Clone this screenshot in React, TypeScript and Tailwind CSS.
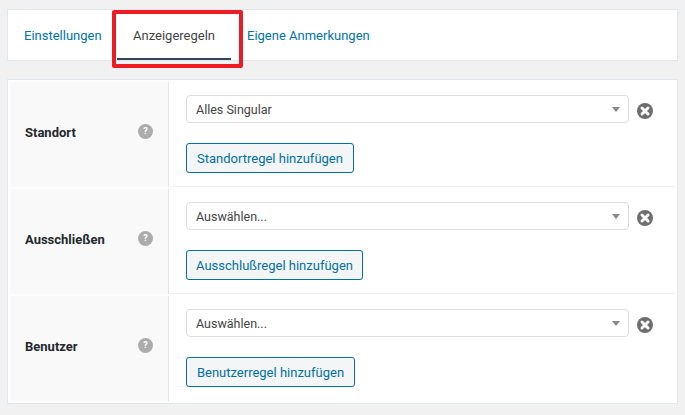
const font = "font-['Roboto','Open_Sans',sans-serif]"

type RuleRowProps = {
    label: string
    value: string
    button: string
    buttonWidth: string
    last?: boolean
}

function HelpIcon() {
    return (
        <span className="flex h-[15px] w-[15px] items-center justify-center rounded-full bg-[#acacac] text-[9px] font-bold leading-none text-white">
            ?
        </span>
    )
}

function RemoveIcon() {
    return (
        <svg width="16" height="16" viewBox="0 0 16 16" className="mt-[4px] shrink-0">
            <circle cx="8" cy="8" r="8" fill="#6e6e6e" />
            <path d="M5 5 L11 11 M11 5 L5 11" stroke="#fff" strokeWidth="3" strokeLinecap="round" />
        </svg>
    )
}

function RuleRow({ label, value, button, buttonWidth, last }: RuleRowProps) {
    return (
        <div className={`flex h-[105px] ${last ? '' : 'mb-[2px]'}`}>
            <div className="relative flex w-[159px] shrink-0 items-center border-r border-[#e5e5e5] bg-[#f9f9f9] pb-[4px] pl-[15px] pr-[15px]">
                <span className="flex-1 text-[13px] font-bold text-[#23282d]">{label}</span>
                <span className="-mt-[3px]">
                    <HelpIcon />
                </span>
            </div>
            <div className={`ml-[2px] flex-1 pl-[15px] pt-[13px] ${last ? '' : 'border-b border-[#eeeeee]'}`}>
                <div className="flex items-center gap-2">
                    <div className="flex h-7 w-[443px] items-center justify-between rounded-[4px] border border-[#dddddd] bg-white pl-[9px] pr-[8px]">
                        <span className="pt-[2px] text-[12.5px] text-[#444444]">{value}</span>
                        <span className="h-0 w-0 border-x-[4px] border-t-[5px] border-x-transparent border-t-[#888888]" />
                    </div>
                    <RemoveIcon />
                </div>
                <button
                    className={`mt-[20px] flex h-[30px] items-center justify-center whitespace-nowrap rounded-[3px] border border-[#0071a1] bg-[#f3f5f6] pt-[1px] text-[13px] text-[#0071a1] ${buttonWidth}`}
                >
                    {button}
                </button>
            </div>
        </div>
    )
}

export default function App() {
    return (
        <div className={`${font} h-[415px] w-[685px] overflow-hidden bg-[#f1f1f1] px-[7px] pt-[9px]`}>
            <div className="relative flex h-[52px] border border-[#e0e6ed] bg-white pl-[16px]">
                <a className="mt-[17px] w-[93px] text-[13px] leading-[18px] text-[#0073aa]">Einstellungen</a>
                <a className="flex h-[50px] w-[114px] justify-center border-b-2 border-[#32465a] pt-[17px] text-[13px] leading-[18px] text-[#444444]">
                    Anzeigeregeln
                </a>
                <a className="ml-[16px] mt-[17px] text-[13px] leading-[18px] text-[#0073aa]">Eigene Anmerkungen</a>
                <div className="absolute left-[104px] top-0 h-[58px] w-[131px] rounded-[2px] border-[4px] border-[#ed1c24]" />
            </div>
            <div className="mt-[18px] border border-[#e0e6ed] bg-white p-[2px]">
                <RuleRow label="Standort" value="Alles Singular" button="Standortregel hinzufügen" buttonWidth="w-[168px]" />
                <RuleRow label="Ausschließen" value="Auswählen..." button="Ausschlußregel hinzufügen" buttonWidth="w-[177px]" />
                <RuleRow label="Benutzer" value="Auswählen..." button="Benutzerregel hinzufügen" buttonWidth="w-[169px]" last />
            </div>
        </div>
    )
}
